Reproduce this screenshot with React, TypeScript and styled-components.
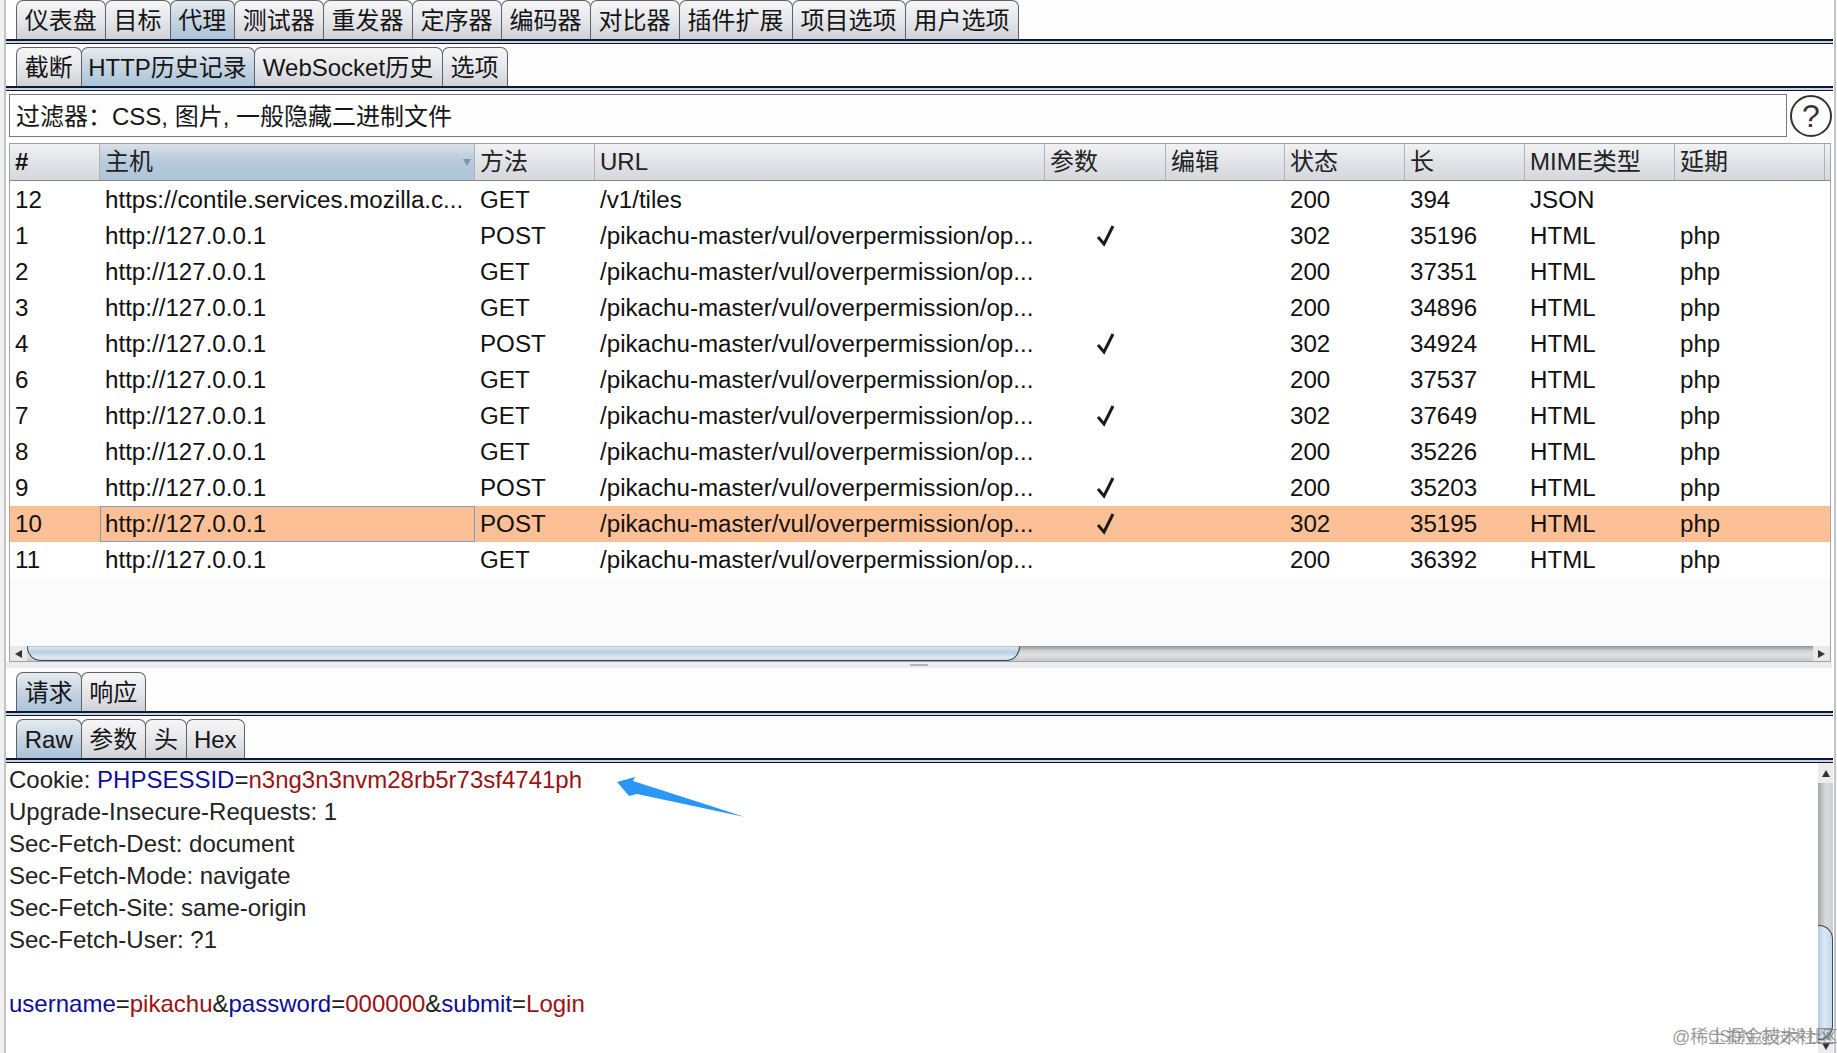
import React from "react";
import styled, { createGlobalStyle } from "styled-components";

const Global = createGlobalStyle`
  html, body { margin: 0; padding: 0; background: #fdfdfd; }
  body { font-family: "Liberation Sans", "Noto Sans CJK SC", sans-serif; }
`;

const Page = styled.div`
  position: relative;
  width: 1837px;
  height: 1053px;
  overflow: hidden;
  display: flex;
  background: #fdfdfd;
  color: #151515;
  font-family: "Liberation Sans", "Noto Sans CJK SC", sans-serif;
  font-size: 24px;
  line-height: 1;
`;
const LeftEdge = styled.div`
  width: 4px;
  flex: none;
  background: #f1f1f1;
  border-right: 2px solid #c4c4c4;
`;
const RightEdge = styled.div`
  width: 1px;
  flex: none;
  margin-left: 1px;
  background: #fdfdfd;
  border-left: 2px solid #c4c4c4;
`;
const Main = styled.div`
  flex: 1;
  min-width: 0;
  display: flex;
  flex-direction: column;
`;
const TabStrip = styled.div<{ $h: number; $top?: number }>`
  height: ${(p) => p.$h}px;
  margin-top: ${(p) => p.$top ?? 0}px;
  padding-left: 10px;
  display: flex;
  align-items: stretch;
  flex: none;
`;
const Tab = styled.div<{ $w: number; $active?: boolean }>`
  width: ${(p) => p.$w}px;
  flex: none;
  box-sizing: border-box;
  border: 1px solid #5e6166;
  border-bottom: none;
  border-radius: 7px 7px 0 0;
  margin-right: -1px;
  padding-top: 2px;
  display: flex;
  align-items: center;
  justify-content: center;
  white-space: nowrap;
  background: ${(p) =>
    p.$active
      ? "linear-gradient(#e6ebf0, #c9d6e2 45%, #a9c3d9)"
      : "linear-gradient(#f6f6f8, #e6e7ea 50%, #cfd2d8)"};
`;
const Rule = styled.div`
  height: 5px;
  flex: none;
  box-sizing: border-box;
  background: #c6d4e6;
  border-top: 2px solid #10182e;
  border-bottom: 1px solid #10182e;
`;
const FilterRow = styled.div`
  display: flex;
  align-items: center;
  gap: 3px;
  margin-top: 3px;
  padding-left: 3px;
  flex: none;
`;
const FilterBox = styled.div`
  width: 1778px;
  height: 43px;
  box-sizing: border-box;
  border: 1px solid #77797c;
  padding: 2px 0 0 6px;
  display: flex;
  align-items: center;
  background: #fdfdfd;
  white-space: pre;
`;
const Help = styled.div`
  width: 42px;
  height: 42px;
  box-sizing: border-box;
  border: 2px solid #333;
  border-radius: 50%;
  display: flex;
  align-items: center;
  justify-content: center;
  font-size: 32px;
  color: #333;
  flex: none;
`;
const TableBox = styled.div`
  margin: 6px 0 0 3px;
  width: 1822px;
  height: 519px;
  box-sizing: border-box;
  border: 1px solid #a0a2a5;
  display: flex;
  flex-direction: column;
  flex: none;
  overflow: hidden;
  background: #fbfbfc;
`;
const columns = "90px 375px 120px 450px 121px 119px 120px 120px 150px 150px 5px";
const HeadRow = styled.div`
  display: grid;
  grid-template-columns: ${columns};
  height: 37px;
  flex: none;
  box-sizing: border-box;
  border-bottom: 1px solid #85888c;
`;
const HeadCell = styled.div<{ $sorted?: boolean }>`
  position: relative;
  box-sizing: border-box;
  padding-left: 5px;
  border-right: 1px solid #b0b2b6;
  display: flex;
  align-items: center;
  color: #222;
  background: ${(p) =>
    p.$sorted
      ? "linear-gradient(#d9e1ea, #b9cbdc 45%, #adc4d9)"
      : "linear-gradient(#f1f2f4, #dfe1e5 55%, #d5d8de)"};
`;
const HashMark = styled.span`
  font-weight: 700;
  color: #111;
`;
const SortMark = styled.span`
  position: absolute;
  right: 3px;
  top: 15px;
  width: 0;
  height: 0;
  border-left: 4px solid transparent;
  border-right: 4px solid transparent;
  border-top: 7px solid #7d94b8;
`;
const Rows = styled.div`
  flex: 1;
  padding-top: 1px;
  min-height: 0;
  font-size: 24.15px;
`;
const Row = styled.div<{ $selected?: boolean }>`
  display: grid;
  grid-template-columns: ${columns};
  height: 36px;
  background: ${(p) => (p.$selected ? "#fdc096" : "#ffffff")};
`;
const Cell = styled.div<{ $focus?: boolean }>`
  box-sizing: border-box;
  padding-left: 5px;
  display: flex;
  align-items: center;
  white-space: nowrap;
  color: #111;
  ${(p) => (p.$focus ? "border: 1px solid #7b9bb8; padding-left: 4px;" : "")}
`;
const CheckCell = styled.div`
  display: flex;
  align-items: center;
  justify-content: center;
`;
const HScroll = styled.div`
  height: 15px;
  flex: none;
  display: flex;
  background: linear-gradient(#8f9295, #cfd0d2 30%, #e1e2e3 60%, #c7c8ca);
`;
const ArrowButton = styled.div`
  width: 17px;
  flex: none;
  background: #e9e9ea;
  display: flex;
  align-items: center;
  justify-content: center;
`;
const ArrowGlyph = styled.span<{ $dir: "left" | "right" | "up" | "down" }>`
  width: 0;
  height: 0;
  ${(p) =>
    p.$dir === "left"
      ? "border-top: 4px solid transparent; border-bottom: 4px solid transparent; border-right: 7px solid #333;"
      : p.$dir === "right"
      ? "border-top: 4px solid transparent; border-bottom: 4px solid transparent; border-left: 7px solid #333;"
      : p.$dir === "up"
      ? "border-left: 4px solid transparent; border-right: 4px solid transparent; border-bottom: 7px solid #333;"
      : "border-left: 4px solid transparent; border-right: 4px solid transparent; border-top: 7px solid #333;"}
`;
const HThumb = styled.div`
  width: 993px;
  flex: none;
  box-sizing: border-box;
  border: 1px solid #39485a;
  border-top-color: #b8c4cf;
  border-radius: 0 0 14px 14px;
  background: linear-gradient(#dbe7f1, #b9cfe1 40%, #dfeaf3 80%, #cbdbe9);
`;
const HTrack = styled.div`
  flex: 1;
`;
const Divider = styled.div`
  height: 6px;
  flex: none;
  background: #ececec;
  margin-right: 1px;
  display: flex;
  justify-content: center;
  align-items: center;
  padding-right: 1px;
`;
const Grip = styled.span`
  width: 18px;
  height: 2px;
  background: #b5b5b5;
`;
const Lower = styled.div`
  flex: 1;
  min-height: 0;
  display: flex;
`;
const TextPane = styled.div`
  flex: 1;
  padding: 1px 0 0 3px;
  background: #ffffff;
  font-size: 24px;
`;
const Line = styled.div`
  height: 32px;
  line-height: 32px;
  white-space: pre;
  color: #222;
`;
const Name = styled.span`
  color: #0d0d96;
`;
const Value = styled.span`
  color: #9b1212;
`;
const VScroll = styled.div`
  width: 15px;
  flex: none;
  display: flex;
  flex-direction: column;
  background: linear-gradient(90deg, #a3a5a8, #d8d9db 50%, #cfd0d2);
`;
const VButton = styled.div<{ $h: number }>`
  height: ${(p) => p.$h}px;
  flex: none;
  background: #ececed;
  display: flex;
  align-items: center;
  justify-content: center;
`;
const VTrack = styled.div`
  flex: 1;
`;
const VThumb = styled.div`
  height: 115px;
  flex: none;
  box-sizing: border-box;
  border-right: 1px solid #39485a;
  border-top: 1px solid #39485a;
  border-bottom: 1px solid #39485a;
  border-radius: 0 14px 14px 0;
  background: linear-gradient(90deg, #b5cade, #dceaf5 45%, #c4d8ea);
`;
const BlueArrow = styled.svg`
  position: absolute;
  left: 610px;
  top: 770px;
`;
const Watermark = styled.div`
  position: absolute;
  left: 1672px;
  top: 1028px;
  font-size: 18px;
  color: rgba(110, 110, 110, 0.7);
  white-space: nowrap;
`;
const WatermarkOver = styled.div`
  position: absolute;
  left: 1708px;
  top: 1029px;
  font-size: 16px;
  color: rgba(110, 110, 110, 0.6);
  white-space: nowrap;
`;

const topTabs: [string, number, boolean?][] = [
  ["仪表盘", 89.5],
  ["目标", 66],
  ["代理", 65.5, true],
  ["测试器", 89.5],
  ["重发器", 90],
  ["定序器", 90],
  ["编码器", 90],
  ["对比器", 90],
  ["插件扩展", 114],
  ["项目选项", 114],
  ["用户选项", 114],
];
const subTabs: [string, number, boolean?][] = [
  ["截断", 65.5],
  ["HTTP历史记录", 174, true],
  ["WebSocket历史", 189],
  ["选项", 66],
];
const reqTabs: [string, number, boolean?][] = [
  ["请求", 65.5, true],
  ["响应", 65.5],
];
const viewTabs: [string, number, boolean?][] = [
  ["Raw", 65.5, true],
  ["参数", 65.5],
  ["头", 42],
  ["Hex", 58.5],
];
const heads = ["#", "主机", "方法", "URL", "参数", "编辑", "状态", "长", "MIME类型", "延期", ""];
const longUrl = "/pikachu-master/vul/overpermission/op...";
type R = [string, string, string, string, boolean, string, string, string, string];
const local = "http://127.0.0.1";
const rows: R[] = [
  ["12", "https://contile.services.mozilla.c...", "GET", "/v1/tiles", false, "200", "394", "JSON", ""],
  ["1", local, "POST", longUrl, true, "302", "35196", "HTML", "php"],
  ["2", local, "GET", longUrl, false, "200", "37351", "HTML", "php"],
  ["3", local, "GET", longUrl, false, "200", "34896", "HTML", "php"],
  ["4", local, "POST", longUrl, true, "302", "34924", "HTML", "php"],
  ["6", local, "GET", longUrl, false, "200", "37537", "HTML", "php"],
  ["7", local, "GET", longUrl, true, "302", "37649", "HTML", "php"],
  ["8", local, "GET", longUrl, false, "200", "35226", "HTML", "php"],
  ["9", local, "POST", longUrl, true, "200", "35203", "HTML", "php"],
  ["10", local, "POST", longUrl, true, "302", "35195", "HTML", "php"],
  ["11", local, "GET", longUrl, false, "200", "36392", "HTML", "php"],
];

const Check = () => (
  <svg width="20" height="24" viewBox="0 0 20 24">
    <polyline points="2,13 8,20 17,2" fill="none" stroke="#1c1c1c" strokeWidth="3" />
  </svg>
);

const Tabs = ({ items, h, top }: { items: [string, number, boolean?][]; h: number; top?: number }) => (
  <TabStrip $h={h} $top={top}>
    {items.map(([t, w, a]) => (
      <Tab key={t} $w={w} $active={a}>
        {t}
      </Tab>
    ))}
  </TabStrip>
);

export default function App() {
  return (
    <Page>
      <Global />
      <LeftEdge />
      <Main>
        <Tabs items={topTabs} h={39} />
        <Rule />
        <Tabs items={subTabs} h={39} top={3} />
        <Rule />
        <FilterRow>
          <FilterBox>过滤器：CSS, 图片, 一般隐藏二进制文件</FilterBox>
          <Help>?</Help>
        </FilterRow>
        <TableBox>
          <HeadRow>
            {heads.map((h, i) => (
              <HeadCell key={i} $sorted={i === 1}>
                {i === 0 ? <HashMark>{h}</HashMark> : h}
                {i === 1 && <SortMark />}
              </HeadCell>
            ))}
          </HeadRow>
          <Rows>
            {rows.map((r, i) => (
              <Row key={r[0]} $selected={i === 9}>
                <Cell>{r[0]}</Cell>
                <Cell $focus={i === 9}>{r[1]}</Cell>
                <Cell>{r[2]}</Cell>
                <Cell>{r[3]}</Cell>
                <CheckCell>{r[4] && <Check />}</CheckCell>
                <Cell />
                <Cell>{r[5]}</Cell>
                <Cell>{r[6]}</Cell>
                <Cell>{r[7]}</Cell>
                <Cell>{r[8]}</Cell>
                <Cell />
              </Row>
            ))}
          </Rows>
          <HScroll>
            <ArrowButton>
              <ArrowGlyph $dir="left" />
            </ArrowButton>
            <HThumb />
            <HTrack />
            <ArrowButton>
              <ArrowGlyph $dir="right" />
            </ArrowButton>
          </HScroll>
        </TableBox>
        <Divider>
          <Grip />
        </Divider>
        <Tabs items={reqTabs} h={39} top={4} />
        <Rule />
        <Tabs items={viewTabs} h={39} top={3} />
        <Rule />
        <Lower>
          <TextPane>
            <Line>
              Cookie: <Name>PHPSESSID</Name>=<Value>n3ng3n3nvm28rb5r73sf4741ph</Value>
            </Line>
            <Line>Upgrade-Insecure-Requests: 1</Line>
            <Line>Sec-Fetch-Dest: document</Line>
            <Line>Sec-Fetch-Mode: navigate</Line>
            <Line>Sec-Fetch-Site: same-origin</Line>
            <Line>Sec-Fetch-User: ?1</Line>
            <Line> </Line>
            <Line>
              <Name>username</Name>=<Value>pikachu</Value>&amp;<Name>password</Name>=<Value>000000</Value>&amp;
              <Name>submit</Name>=<Value>Login</Value>
            </Line>
          </TextPane>
          <VScroll>
            <VButton $h={20}>
              <ArrowGlyph $dir="up" />
            </VButton>
            <VTrack />
            <VThumb />
            <VButton $h={13}>
              <ArrowGlyph $dir="down" />
            </VButton>
          </VScroll>
        </Lower>
      </Main>
      <RightEdge />
      <BlueArrow width="145" height="55" viewBox="610 770 145 55">
        <polygon points="617,782 635,777 633,781 745,817 637,794 629,796" fill="#2a96f5" />
      </BlueArrow>
      <Watermark>@稀土掘金技术社区</Watermark>
      <WatermarkOver>CSDN @技术社区</WatermarkOver>
    </Page>
  );
}
